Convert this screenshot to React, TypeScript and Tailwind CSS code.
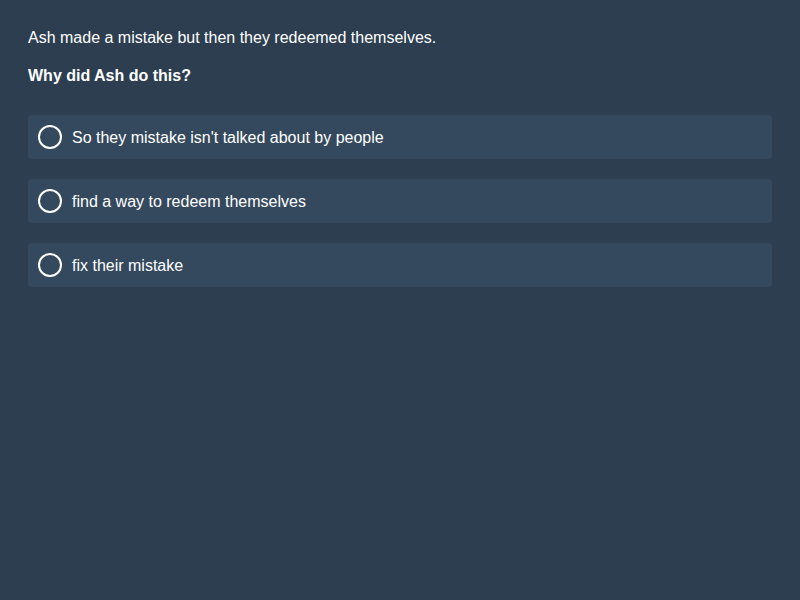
const options = [
  "So they mistake isn't talked about by people",
  'find a way to redeem themselves',
  'fix their mistake',
];

export default function App() {
  return (
    <div className="min-h-screen w-full bg-[#2c3e50] px-[28px] pt-[29px] text-white font-['Liberation_Sans',Arial,sans-serif]">
      <p className="text-[16px] leading-[18px]">Ash made a mistake but then they redeemed themselves.</p>
      <p className="mt-[20px] text-[16px] leading-[18px] font-bold">Why did Ash do this?</p>

      <div className="mt-[30px] flex flex-col gap-[20px]">
        {options.map((opt) => (
          <label
            key={opt}
            className="flex h-[44px] items-center gap-[10px] rounded-[4px] bg-[#34495e] pl-[10px] cursor-pointer"
          >
            <span className="h-[24px] w-[24px] shrink-0 rounded-full border-2 border-white" />
            <span className="mt-[2px] text-[16px] leading-[18px]">{opt}</span>
          </label>
        ))}
      </div>
    </div>
  );
}
